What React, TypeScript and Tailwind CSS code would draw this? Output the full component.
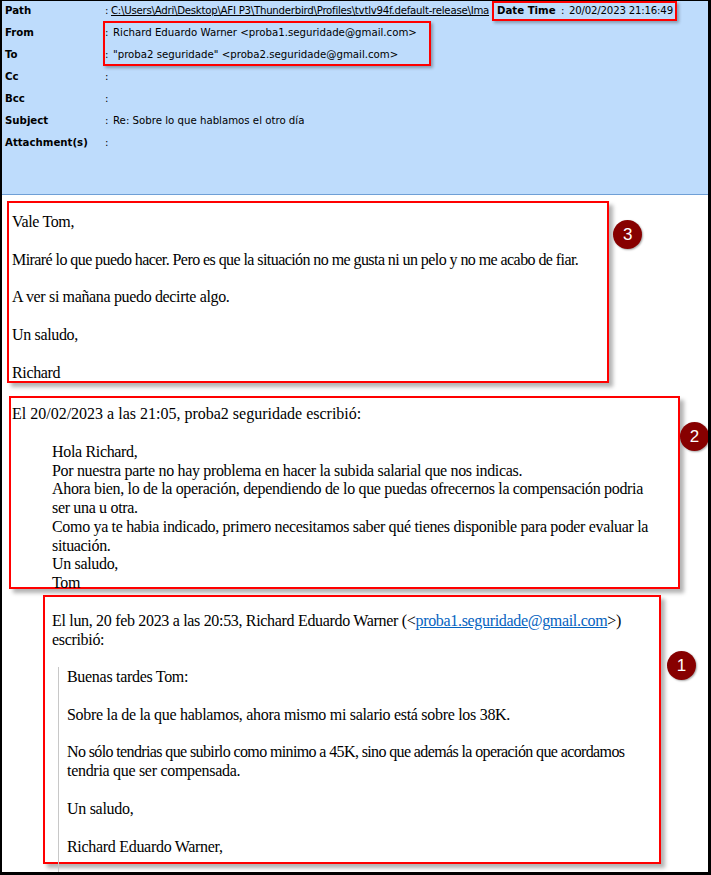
import React from 'react';

const headerFont = { fontFamily: '"DejaVu Sans", Verdana, sans-serif' };
const bodyFont = { fontFamily: '"Liberation Serif", "Times New Roman", serif' };

const rows = [
  { label: 'Path', value: null },
  { label: 'From', value: 'Richard Eduardo Warner <proba1.seguridade@gmail.com>' },
  { label: 'To', value: '"proba2 seguridade" <proba2.seguridade@gmail.com>' },
  { label: 'Cc', value: '' },
  { label: 'Bcc', value: '' },
  { label: 'Subject', value: 'Re: Sobre lo que hablamos el otro día' },
  { label: 'Attachment(s)', value: '' },
];

function Badge({ n, className }: { n: number; className: string }) {
  return (
    <div
      className={`absolute flex h-[29px] w-[29px] items-center justify-center rounded-full bg-[#870000] text-[17px] leading-none text-white shadow-[1px_1px_2px_rgba(0,0,0,0.35)] ${className}`}
      style={{ fontFamily: '"Liberation Sans", Arial, sans-serif' }}
    >
      {n}
    </div>
  );
}

export default function App() {
  return (
    <div className="relative h-[875px] w-[711px] overflow-hidden border-t border-b-[3px] border-l-2 border-r-[3px] border-black bg-white">
      {/* Cabecera */}
      <div
        className="relative h-[195px] border-b border-[#6f9fd6] bg-[#bedcfc] text-[10.2px] text-black"
        style={headerFont}
      >
        <div className="-mt-px flex flex-col">
          {rows.map((r) => (
            <div key={r.label} className="flex h-[22px] items-center">
              <span className="w-[103px] pl-[3px] font-bold">{r.label}</span>
              <span className="w-[8px]">:</span>
              {r.value === null ? (
                <>
                  <span className="-ml-[2px] w-[381px] whitespace-nowrap tracking-[-0.25px] underline">
                    {'C:\\Users\\Adri\\Desktop\\AFI P3\\Thunderbird\\Profiles\\tvtlv94f.default-release\\Ima'}
                  </span>
                  <div className="mt-px flex h-[20px] w-[185px] items-center self-start whitespace-nowrap border-2 border-[#f00] pl-[3px] shadow-[2px_2px_3px_rgba(0,0,0,0.3)]">
                    <span className="w-[64px] font-bold">Date Time</span>
                    <span className="w-[8px]">:</span>
                    <span className="tracking-[-0.2px]">20/02/2023 21:16:49</span>
                  </div>
                </>
              ) : (
                <span className="whitespace-nowrap">{r.value}</span>
              )}
            </div>
          ))}
        </div>
        <div className="absolute left-[101px] top-[21px] h-[45px] w-[328px] border-2 border-[#f00] shadow-[2px_2px_3px_rgba(0,0,0,0.3)]" />
      </div>

      {/* Cuerpo */}
      <div className="text-[16px] text-black" style={bodyFont}>
        {/* 3 */}
        <div className="relative ml-[5px] mt-[6px] h-[182px] w-[602px] whitespace-nowrap border-2 border-[#f00] pl-[3px] pt-[9px] leading-[19px] tracking-[-0.35px] shadow-[4px_4px_4px_rgba(0,0,0,0.3)]">
          <p className="mb-[19px]">Vale Tom,</p>
          <p className="mb-[18px] tracking-[-0.57px]">
            Miraré lo que puedo hacer. Pero es que la situación no me gusta ni un pelo y no me acabo de fiar.
          </p>
          <p className="mb-[19px]">A ver si mañana puedo decirte algo.</p>
          <p className="mb-[19px]">Un saludo,</p>
          <p>Richard</p>
          <Badge n={3} className="left-[604px] top-[17px]" />
        </div>

        {/* 2 */}
        <div className="relative ml-[7px] mt-[13px] h-[193px] w-[671px] border-2 border-[#f00] pl-px pt-[6px] shadow-[4px_4px_4px_rgba(0,0,0,0.3)]">
          <p className="leading-[19px]">El 20/02/2023 a las 21:05, proba2 seguridade escribió:</p>
          <div className="mt-[20px] whitespace-nowrap pl-[40px] leading-[18.7px] tracking-[-0.33px]">
            Hola Richard,
            <br />
            Por nuestra parte no hay problema en hacer la subida salarial que nos indicas.
            <br />
            Ahora bien, lo de la operación, dependiendo de lo que puedas ofrecernos la compensación podria
            <br />
            ser una u otra.
            <br />
            Como ya te habia indicado, primero necesitamos saber qué tienes disponible para poder evaluar la
            <br />
            situación.
            <br />
            Un saludo,
            <br />
            Tom
          </div>
          <Badge n={2} className="left-[669px] top-[24px]" />
        </div>

        {/* 1 */}
        <div className="relative ml-[41px] mt-[6px] h-[269px] w-[618px] border-2 border-[#f00] pl-[7px] pt-[14px] shadow-[4px_4px_4px_rgba(0,0,0,0.3)]">
          <p className="whitespace-nowrap leading-[19px] tracking-[-0.32px]">
            El lun, 20 feb 2023 a las 20:53, Richard Eduardo Warner (&lt;
            <a className="text-[#0563c1] underline">proba1.seguridade@gmail.com</a>&gt;)
            <br />
            escribió:
          </p>
          <div className="ml-[6px] mt-[18px] whitespace-nowrap border-l border-[#c8c8c8] pb-[40px] pl-[8px] leading-[19px] tracking-[-0.3px]">
            <p className="mb-[19px]">Buenas tardes Tom:</p>
            <p className="mb-[18px]">Sobre la de la que hablamos, ahora mismo mi salario está sobre los 38K.</p>
            <p className="mb-[19px]">
              <span className="tracking-[-0.62px]">
                No sólo tendrias que subirlo como minimo a 45K, sino que además la operación que acordamos
              </span>
              <br />
              tendria que ser compensada.
            </p>
            <p className="mb-[19px]">Un saludo,</p>
            <p>Richard Eduardo Warner,</p>
          </div>
          <Badge n={1} className="left-[622px] top-[54px]" />
        </div>
      </div>
    </div>
  );
}
